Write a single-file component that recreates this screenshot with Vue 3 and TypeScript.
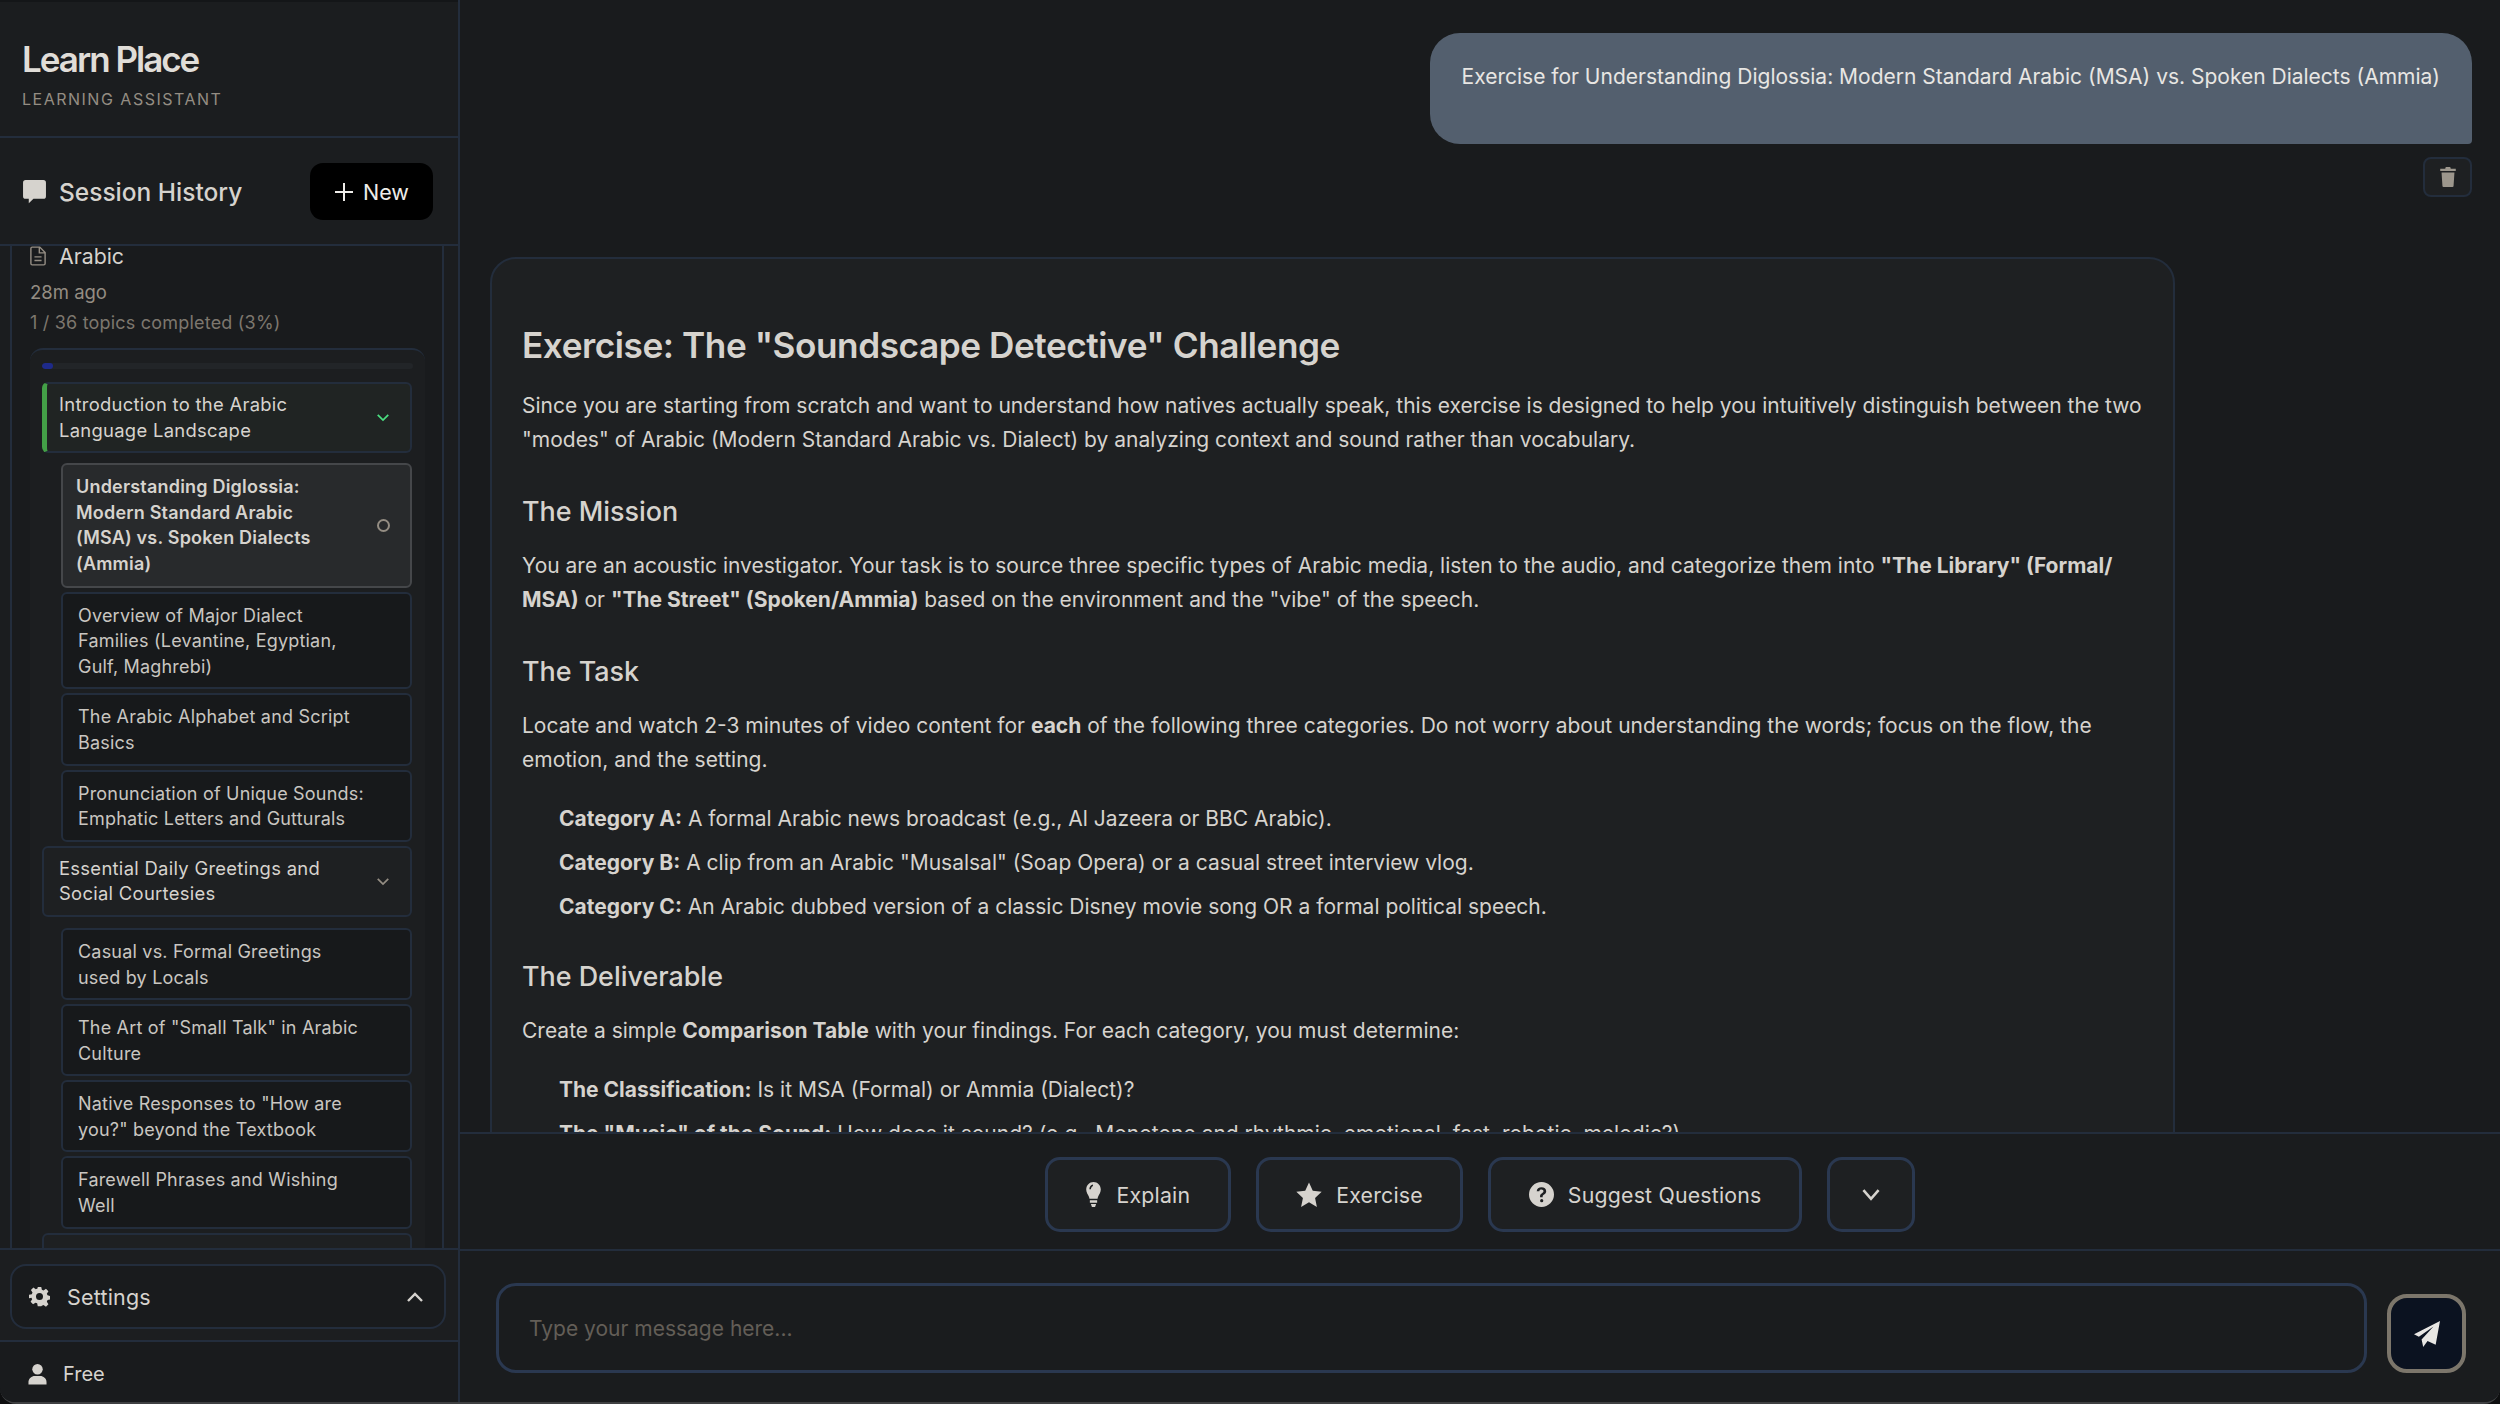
<script setup lang="ts">
interface Topic {
  title: string;
  kind: "section" | "active" | "leaf";
  done?: boolean;
}

const topics: Topic[] = [
  { title: "Introduction to the Arabic Language Landscape", kind: "section", done: true },
  { title: "Understanding Diglossia: Modern Standard Arabic (MSA) vs. Spoken Dialects (Ammia)", kind: "active" },
  { title: "Overview of Major Dialect Families (Levantine, Egyptian, Gulf, Maghrebi)", kind: "leaf" },
  { title: "The Arabic Alphabet and Script Basics", kind: "leaf" },
  { title: "Pronunciation of Unique Sounds: Emphatic Letters and Gutturals", kind: "leaf" },
  { title: "Essential Daily Greetings and Social Courtesies", kind: "section" },
  { title: "Casual vs. Formal Greetings used by Locals", kind: "leaf" },
  { title: 'The Art of "Small Talk" in Arabic Culture', kind: "leaf" },
  { title: 'Native Responses to "How are you?" beyond the Textbook', kind: "leaf" },
  { title: "Farewell Phrases and Wishing Well", kind: "leaf" },
  { title: "\u00a0", kind: "section" },
];
</script>

<template>
  <div class="app">
    <aside class="sidebar">
      <header class="brand">
        <h1>Learn Place</h1>
        <p>LEARNING ASSISTANT</p>
      </header>

      <div class="history-head">
        <div class="history-title">
          <svg class="icon-chat" viewBox="0 0 24 24"><path d="M3.500 1h17A2.500 2.500 0 0 1 23 3.500v13a2.500 2.500 0 0 1-2.500 2.500H11l-4.500 4.200V19h-3A2.500 2.500 0 0 1 1 16.500v-13A2.500 2.500 0 0 1 3.500 1z" /></svg>
          <span>Session History</span>
        </div>
        <button class="new-btn">
          <svg viewBox="0 0 20 20"><path d="M10 1v18M1 10h18" /></svg>
          New
        </button>
      </div>

      <div class="history-list">
        <div class="session">
          <div class="session-name">
            <svg viewBox="0 0 18 22"><path d="M2.500 1H11l6 6v12.500a1.500 1.500 0 0 1-1.500 1.500h-13A1.500 1.500 0 0 1 1 19.500v-17A1.500 1.500 0 0 1 2.500 1zM10.500 1.500V7.500H16.500M5 12h8M5 16h8" /></svg>
            <span>Arabic</span>
          </div>
          <div class="session-time">28m ago</div>
          <div class="session-progress">1 / 36 topics completed (3%)</div>

          <div class="outline">
            <div class="bar"><div class="bar-fill" :style="{ width: '3%' }"></div></div>
            <div v-for="(t, i) in topics" :key="i" class="topic" :class="[t.kind, { done: t.done }]">
              <span class="topic-text">{{ t.title }}</span>
              <svg v-if="t.kind === 'section'" class="chev" viewBox="0 0 16 10"><path d="M2 2l6 6 6-6" /></svg>
              <span v-else-if="t.kind === 'active'" class="ring"></span>
            </div>
          </div>
        </div>
      </div>

      <div class="settings-wrap">
        <button class="settings">
          <svg class="gear" viewBox="0 0 24 24"><path fill-rule="evenodd" d="M10 1h4l.7 3.200 1.900.8 2.800-1.800 2.800 2.800-1.800 2.800.8 1.900 3.200.7v4l-3.200.7-.8 1.900 1.800 2.800-2.800 2.800-2.800-1.800-1.900.8L14 23h-4l-.7-3.200-1.900-.8-2.800 1.800-2.800-2.800 1.800-2.800-.8-1.900L0 14v-4l3.200-.7.8-1.900L2.200 4.600 5 1.800l2.800 1.800 1.900-.8zM12 8a4 4 0 1 0 0 8 4 4 0 0 0 0-8z" /></svg>
          <span>Settings</span>
          <svg class="chev-up" viewBox="0 0 18 12"><path d="M2 10l7-7 7 7" /></svg>
        </button>
      </div>

      <div class="plan">
        <svg viewBox="0 0 20 22"><circle cx="10" cy="6" r="5.500" /><path d="M0.500 22v-2.500C.5 15.500 4 13 7 13h6c3 0 6.500 2.500 6.500 6.500V22z" /></svg>
        <span>Free</span>
      </div>
    </aside>

    <main class="main">
      <div class="chat">
        <div class="user-row">
          <div class="bubble">Exercise for Understanding Diglossia: Modern Standard Arabic (MSA) vs. Spoken Dialects (Ammia)</div>
          <button class="trash">
            <svg viewBox="0 0 14 18"><path d="M5 0h4l.5 1.500H14v2H0v-2h4.500zM1.200 5h11.600l-.8 12a1 1 0 0 1-1 1H3a1 1 0 0 1-1-1z" /></svg>
          </button>
        </div>

        <article class="answer">
          <h2>Exercise: The "Soundscape Detective" Challenge</h2>
          <p>Since you are starting from scratch and want to understand how natives actually speak, this exercise is designed to help you intuitively distinguish between the two "modes" of Arabic (Modern Standard Arabic vs. Dialect) by analyzing context and sound rather than vocabulary.</p>
          <h3>The Mission</h3>
          <p>You are an acoustic investigator. Your task is to source three specific types of Arabic media, listen to the audio, and categorize them into <b>"The Library" (Formal/<wbr />MSA)</b> or <b>"The Street" (Spoken/Ammia)</b> based on the environment and the "vibe" of the speech.</p>
          <h3>The Task</h3>
          <p>Locate and watch 2-3 minutes of video content for <b>each</b> of the following three categories. Do not worry about understanding the words; focus on the flow, the emotion, and the setting.</p>
          <ul>
            <li><b>Category A:</b> A formal Arabic news broadcast (e.g., Al Jazeera or BBC Arabic).</li>
            <li><b>Category B:</b> A clip from an Arabic "Musalsal" (Soap Opera) or a casual street interview vlog.</li>
            <li><b>Category C:</b> An Arabic dubbed version of a classic Disney movie song OR a formal political speech.</li>
          </ul>
          <h3 class="after-list">The Deliverable</h3>
          <p>Create a simple <b>Comparison Table</b> with your findings. For each category, you must determine:</p>
          <ul>
            <li><b>The Classification:</b> Is it MSA (Formal) or Ammia (Dialect)?</li>
            <li><b>The "Music" of the Sound:</b> How does it sound? (e.g., Monotone and rhythmic, emotional, fast, robotic, melodic?)</li>
          </ul>
        </article>
      </div>

      <div class="actions">
        <button class="action">
          <svg class="i-bulb" viewBox="0 0 14 24"><path fill-rule="evenodd" d="M7 0c3.900 0 7 3.200 7 7.200 0 3-1.700 4.700-2.600 7-.3.800-.4 1.300-.5 1.800H3.100c-.1-.5-.2-1-.5-1.800C1.700 11.900 0 10.200 0 7.200 0 3.200 3.100 0 7 0zM6.500 2.500C4.500 2.800 3 4.700 3 7h1.500c0-1.500 1-3 2-3.200zM3.500 17.500h7v2.500h-7zM4.500 21h5L8.500 24h-3z" /></svg>
          Explain
        </button>
        <button class="action">
          <svg class="i-star" viewBox="0 0 24 24"><path d="M12 .5l3.500 7.600 8.200 1-6.100 5.600 1.700 8.300-7.300-4.200-7.300 4.200 1.700-8.300L.3 9.100l8.200-1z" /></svg>
          Exercise
        </button>
        <button class="action">
          <svg class="i-help" viewBox="0 0 24 24"><path fill-rule="evenodd" d="M12 0a12 12 0 1 1 0 24 12 12 0 0 1 0-24zM12 5c-2.600 0-4.400 1.400-4.600 3.800h2.500c.1-1 .9-1.600 2-1.600 1.200 0 2 .7 2 1.600 0 .9-.5 1.300-1.500 2-1.200.8-1.900 1.600-1.800 3.200v.6h2.500V14c0-.9.400-1.200 1.400-1.900 1.200-.8 2-1.700 2-3.300C16.500 6.500 14.700 5 12 5zM12.200 16.400a1.500 1.500 0 1 0 0 3.100 1.500 1.500 0 0 0 0-3.100z" /></svg>
          Suggest Questions
        </button>
        <button class="action more">
          <svg viewBox="0 0 18 12"><path d="M2 2l7 8 7-8" /></svg>
        </button>
      </div>

      <div class="composer">
        <div class="input">Type your message here...</div>
        <button class="send">
          <svg viewBox="0 0 24 24"><path d="M24 0L20 22l-7.500-3.500L8.500 24l-1.500-7L18 5 4.500 14.500 0 12.200z" /></svg>
        </button>
      </div>
    </main>
  </div>
</template>

<style>
html,
body {
  margin: 0;
  background: #0e0f10;
}
</style>

<style scoped>
* {
  box-sizing: border-box;
}

.app {
  display: flex;
  width: 2500px;
  height: 1404px;
  overflow: hidden;
  background: #191b1d;
  border-bottom: 2px solid #3f4042;
  border-radius: 0 0 16px 16px;
  color: #d6d3ce;
  font-family: Inter, "Liberation Sans", sans-serif;
}

button {
  font-family: inherit;
  color: inherit;
  background: none;
  border: 0;
  padding: 0;
}

svg {
  display: block;
  flex: none;
  fill: currentColor;
}

/* 侧边栏 */
.sidebar {
  display: flex;
  flex-direction: column;
  flex: none;
  width: 460px;
  height: 100%;
  background: #1b1d1f;
  border-right: 2px solid #232d3c;
}

.brand {
  flex: none;
  height: 138px;
  padding: 38px 22px 0;
  border-top: 2px solid #141618;
  border-bottom: 2px solid #232d3c;
}

.brand h1 {
  margin: 0;
  font-size: 35px;
  line-height: 39px;
  font-weight: 600;
  letter-spacing: -2px;
  color: #e0ddd8;
}

.brand p {
  margin: 10px 0 0;
  font-size: 16px;
  line-height: 20px;
  letter-spacing: 1.5px;
  color: #948d83;
}

.history-head {
  flex: none;
  display: flex;
  align-items: center;
  justify-content: space-between;
  height: 108px;
  padding: 1px 25px 0 22px;
  border-bottom: 2px solid #232d3c;
}

.history-title {
  display: flex;
  align-items: center;
  gap: 12px;
  font-size: 24.5px;
  font-weight: 500;
}

.icon-chat {
  width: 25px;
  height: 25px;
}

.new-btn {
  display: flex;
  align-items: center;
  justify-content: center;
  gap: 9px;
  width: 123px;
  height: 57px;
  background: #000;
  border-radius: 13px;
  font-size: 21.5px;
  color: #eeece9;
}

.new-btn svg {
  width: 20px;
  height: 20px;
  fill: none;
  stroke: currentColor;
  stroke-width: 2;
}

.history-list {
  flex: 1;
  min-height: 0;
  overflow: hidden;
  padding: 0 14px 0 10px;
  background: #1b1d1f;
}

.session {
  height: 100%;
  padding: 0 17px 0 18px;
  background: #191b1d;
  border-left: 2px solid #232d3c;
  border-right: 2px solid #232d3c;
}

.session-name {
  display: flex;
  align-items: center;
  gap: 13px;
  height: 20px;
  font-size: 21.3px;
}

.session-name svg {
  width: 16px;
  height: 22px;
  fill: none;
  stroke: #948d83;
  stroke-width: 1.6;
}

.session-time {
  margin-top: 14px;
  font-size: 18.5px;
  line-height: 24px;
  color: #948d83;
}

.session-progress {
  margin-top: 7px;
  font-size: 18px;
  line-height: 24px;
  letter-spacing: 0.2px;
  color: #7d776e;
}

.outline {
  margin-top: 13px;
  padding: 13px 12px 0;
  background: #1c1e20;
  border-top: 2px solid #232d3c;
  border-radius: 13px 13px 0 0;
}

.bar {
  height: 6px;
  margin-bottom: 13px;
  background: #222528;
  border-radius: 3px;
  overflow: hidden;
}

.bar-fill {
  height: 100%;
  background: #1e2a8a;
  border-radius: 3px;
}

.topic {
  display: flex;
  align-items: center;
  justify-content: space-between;
  gap: 24px;
  font-size: 18px;
  line-height: 25.6px;
  letter-spacing: 0.2px;
}

.topic-text {
  flex: 1;
  min-width: 0;
}

.section {
  width: 370px;
  margin-bottom: 11px;
  padding: 8px 20px 8px 15px;
  background: #1e2022;
  border: 2px solid #232d3c;
  border-radius: 6px;
  font-size: 18.4px;
  letter-spacing: 0.3px;
}

.done {
  margin-bottom: 10px;
  border-left: 5px solid #43a047;
  background: #202423;
  padding-left: 12px;
}

.section.done .chev {
  color: #4ade80;
}

.chev {
  width: 14px;
  height: 9px;
  fill: none;
  stroke: currentColor;
  stroke-width: 2;
  color: #948d83;
}

.active,
.leaf {
  width: 351px;
  margin-left: 19px;
  margin-bottom: 4px;
  padding: 9px 20px 9px 13px;
  border: 2px solid #232d3c;
  border-radius: 6px;
}

.active {
  background: #282a2c;
  border-color: #45474a;
  font-weight: 600;
}

.leaf {
  background: #17191b;
  padding: 9px 45px 8px 15px;
  color: #c9c6c1;
}

.ring {
  flex: none;
  width: 13px;
  height: 13px;
  border: 2px solid #948d83;
  border-radius: 50%;
}

.settings-wrap {
  flex: none;
  height: 94px;
  padding: 14px 12px 0 10px;
  border-top: 2px solid #232d3c;
  border-bottom: 2px solid #232d3c;
  background: #1c1e20;
}

.settings {
  display: flex;
  align-items: center;
  width: 100%;
  height: 65px;
  padding: 0 20px 0 17px;
  background: #191b1d;
  border: 2px solid #232d3c;
  border-radius: 16px;
  font-size: 21.5px;
  letter-spacing: 0.2px;
}

.gear {
  width: 21px;
  height: 21px;
  margin-right: 17px;
}

.chev-up {
  width: 18px;
  height: 12px;
  margin-left: auto;
  fill: none;
  stroke: currentColor;
  stroke-width: 2.4;
}

.plan {
  flex: none;
  height: 60px;
  display: flex;
  align-items: center;
  gap: 16px;
  padding: 4px 0 0 28px;
  background: #191b1d;
  font-size: 20px;
}

.plan svg {
  width: 19px;
  height: 22px;
}

/* 主区域 */
.main {
  flex: 1;
  min-width: 0;
  display: flex;
  flex-direction: column;
}

.chat {
  flex: 1;
  min-height: 0;
  overflow: hidden;
  padding: 33px 28px 0 30px;
}

.user-row {
  display: flex;
  flex-direction: column;
  align-items: flex-end;
}

.bubble {
  height: 111px;
  padding: 29px 32px;
  background: #535f6e;
  border-radius: 30px 30px 4px 30px;
  font-size: 21px;
  line-height: 30px;
  color: #e8e6e3;
}

.trash {
  display: flex;
  align-items: center;
  justify-content: center;
  width: 49px;
  height: 40px;
  margin-top: 13px;
  background: #1e2022;
  border: 2px solid #232d3c;
  border-radius: 8px;
  color: #9c968c;
}

.trash svg {
  width: 16px;
  height: 20px;
}

.answer {
  width: 1685px;
  margin-top: 60px;
  padding: 64px 30px 0;
  background: #1e2022;
  border: 2px solid #232d3c;
  border-radius: 26px;
  font-size: 21px;
  line-height: 34px;
  color: #d6d3ce;
}

.answer b {
  font-weight: 650;
}

.answer h2 {
  margin: 0 0 22px;
  font-size: 35.2px;
  line-height: 44px;
  font-weight: 600;
  letter-spacing: -0.45px;
}

.answer h3 {
  margin: 36px 0 20px;
  font-size: 26.9px;
  line-height: 36px;
  font-weight: 500;
}

.answer h3.after-list {
  margin-top: 34px;
}

.answer p {
  margin: 0;
}

.answer ul {
  list-style: none;
  margin: 25px 0 0;
  padding: 0 0 0 37px;
}

.answer li {
  margin-bottom: 10px;
}

.answer ul:has(+ .after-list) li:last-child {
  margin-bottom: 0;
}

.actions {
  flex: none;
  display: flex;
  align-items: center;
  justify-content: center;
  gap: 25px;
  height: 119px;
  padding-top: 6px;
  background: #1a1c1e;
  border-top: 2px solid #232d3c;
  border-bottom: 2px solid #232d3c;
}

.action {
  display: flex;
  align-items: center;
  gap: 14px;
  height: 75px;
  padding: 0 37.5px;
  background: #1e2022;
  border: 3px solid #2a3850;
  border-radius: 15px;
  font-size: 21.3px;
  letter-spacing: 0.2px;
}

.i-bulb {
  width: 17px;
  height: 25px;
}

.i-star {
  width: 26px;
  height: 26px;
}

.i-help {
  width: 25px;
  height: 25px;
}

.action.more {
  padding: 0 31px;
}

.more svg {
  width: 20px;
  height: 13px;
  fill: none;
  stroke: currentColor;
  stroke-width: 2.4;
}

.composer {
  flex: none;
  display: flex;
  align-items: flex-end;
  gap: 20px;
  height: 151px;
  padding: 31px 34px 29px 36px;
  background: #1a1c1e;
}

.input {
  flex: 1;
  display: flex;
  align-items: center;
  height: 90px;
  padding: 0 30px;
  border: 3px solid #2a3850;
  border-radius: 20px;
  font-size: 21px;
  color: #635e57;
}

.send {
  flex: none;
  display: flex;
  align-items: center;
  justify-content: center;
  width: 79px;
  height: 79px;
  background: #0b1220;
  border: 4px solid #7c766b;
  border-radius: 20px;
  color: #e8e6e3;
}

.send svg {
  width: 26px;
  height: 26px;
}
</style>
